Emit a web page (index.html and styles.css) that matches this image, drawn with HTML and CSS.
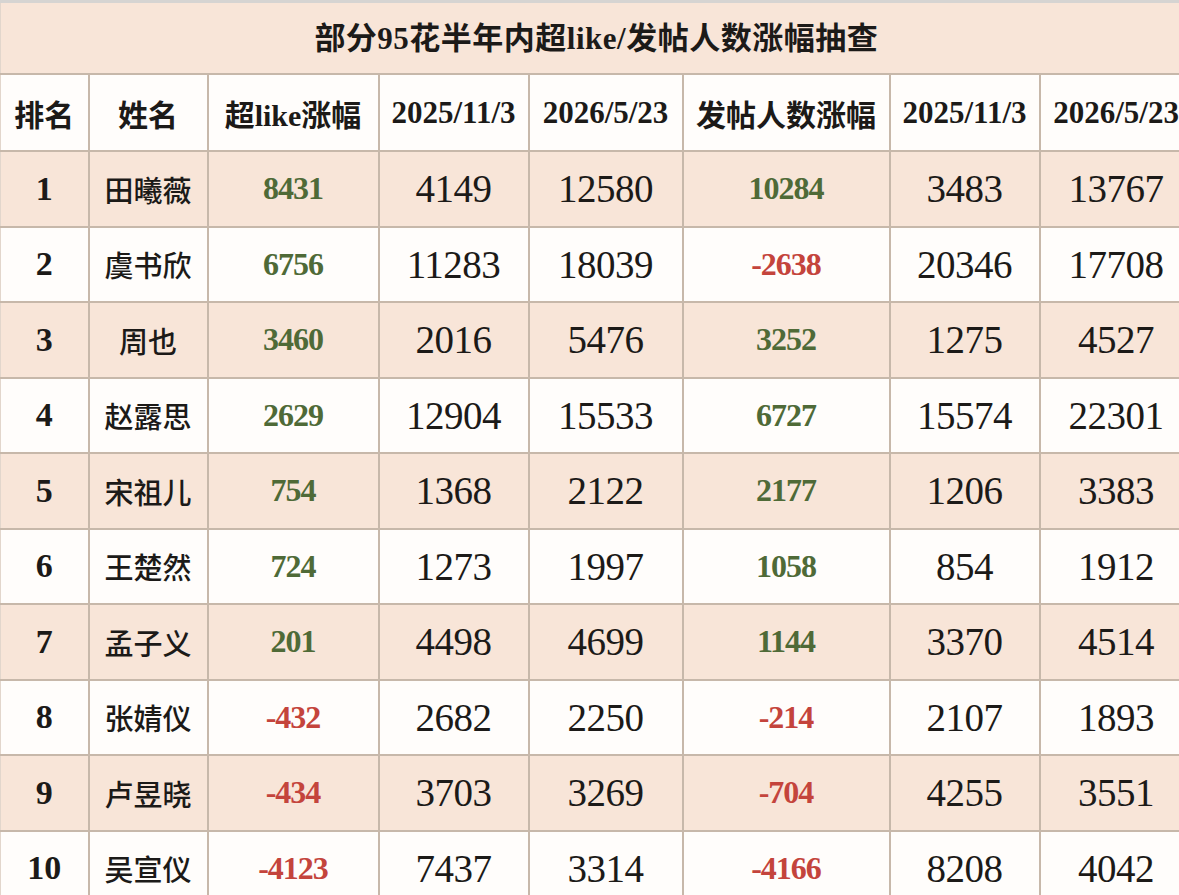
FILE: index.html
```html
<!DOCTYPE html>
<html lang="zh">
<head>
<meta charset="utf-8">
<title>部分95花半年内超like/发帖人数涨幅抽查</title>
<link rel="stylesheet" href="styles.css">
</head>
<body>
<table class="sheet">
  <colgroup>
    <col class="c1"><col class="c2"><col class="c3"><col class="c4">
    <col class="c5"><col class="c6"><col class="c7"><col class="c8">
  </colgroup>
  <tr class="title-row"><td colspan="8" class="title">部分95花半年内超like/发帖人数涨幅抽查</td></tr>
  <tr class="head">
    <td>排名</td><td>姓名</td><td>超like涨幅</td><td class="date">2025/11/3</td><td class="date">2026/5/23</td><td>发帖人数涨幅</td><td class="date">2025/11/3</td><td class="date">2026/5/23</td>
  </tr>
  <tr class="row odd"><td class="rank">1</td><td class="name">田曦薇</td><td class="up">8431</td><td class="num">4149</td><td class="num">12580</td><td class="up">10284</td><td class="num">3483</td><td class="num">13767</td></tr>
  <tr class="row"><td class="rank">2</td><td class="name">虞书欣</td><td class="up">6756</td><td class="num">11283</td><td class="num">18039</td><td class="down">-2638</td><td class="num">20346</td><td class="num">17708</td></tr>
  <tr class="row odd"><td class="rank">3</td><td class="name">周也</td><td class="up">3460</td><td class="num">2016</td><td class="num">5476</td><td class="up">3252</td><td class="num">1275</td><td class="num">4527</td></tr>
  <tr class="row"><td class="rank">4</td><td class="name">赵露思</td><td class="up">2629</td><td class="num">12904</td><td class="num">15533</td><td class="up">6727</td><td class="num">15574</td><td class="num">22301</td></tr>
  <tr class="row odd"><td class="rank">5</td><td class="name">宋祖儿</td><td class="up">754</td><td class="num">1368</td><td class="num">2122</td><td class="up">2177</td><td class="num">1206</td><td class="num">3383</td></tr>
  <tr class="row"><td class="rank">6</td><td class="name">王楚然</td><td class="up">724</td><td class="num">1273</td><td class="num">1997</td><td class="up">1058</td><td class="num">854</td><td class="num">1912</td></tr>
  <tr class="row odd"><td class="rank">7</td><td class="name">孟子义</td><td class="up">201</td><td class="num">4498</td><td class="num">4699</td><td class="up">1144</td><td class="num">3370</td><td class="num">4514</td></tr>
  <tr class="row"><td class="rank">8</td><td class="name">张婧仪</td><td class="down">-432</td><td class="num">2682</td><td class="num">2250</td><td class="down">-214</td><td class="num">2107</td><td class="num">1893</td></tr>
  <tr class="row odd"><td class="rank">9</td><td class="name">卢昱晓</td><td class="down">-434</td><td class="num">3703</td><td class="num">3269</td><td class="down">-704</td><td class="num">4255</td><td class="num">3551</td></tr>
  <tr class="row"><td class="rank">10</td><td class="name">吴宣仪</td><td class="down">-4123</td><td class="num">7437</td><td class="num">3314</td><td class="down">-4166</td><td class="num">8208</td><td class="num">4042</td></tr>
</table>
</body>
</html>
```
FILE: styles.css
```css
html, body {
  margin: 0;
  padding: 0;
  background: #fffdfb;
  overflow: hidden;
}
body {
  width: 1179px;
  height: 895px;
}
.sheet {
  width: 1192px;
  table-layout: fixed;
  border-collapse: collapse;
  border-top: 3px solid #d6d4d2;
  font-family: "Liberation Serif", "Noto Sans CJK SC", serif;
  color: #1c1a18;
}
.c1 { width: 88px; }
.c2 { width: 119px; }
.c3 { width: 171px; }
.c4 { width: 150px; }
.c5 { width: 154px; }
.c6 { width: 207px; }
.c7 { width: 150px; }
.c8 { width: 153px; }

.sheet td {
  border: 2px solid #c7b8aa;
  text-align: center;
  vertical-align: middle;
  padding: 0;
  white-space: nowrap;
  overflow: hidden;
}
.title-row td {
  height: 64px;
  background: #f8e5d8;
  border-top: none;
  border-left: 1px solid #e2d6cc;
  font-size: 31px;
  font-weight: 700;
  letter-spacing: 0.5px;
  padding-bottom: 6px;
}
.head td {
  height: 75px;
  background: #fffdfb;
  font-size: 30px;
  font-weight: 700;
}
.head td.date {
  font-size: 31px;
}
.row td {
  height: 73.5px;
  background: #fffdfb;
}
.row.odd td {
  background: #f8e5d8;
}
.sheet td:first-child {
  border-left: 1px solid #e2d6cc;
}
.rank {
  font-size: 34px;
  font-weight: 700;
}
.name {
  font-family: "Noto Sans CJK SC", sans-serif;
  font-size: 29px;
  font-weight: 500;
}
.num {
  font-size: 39px;
  letter-spacing: -0.5px;
}
.up, .down {
  font-size: 32px;
  font-weight: 700;
  letter-spacing: -1px;
}
.up { color: #4f6a37; }
.down { color: #c4443c; }
```
